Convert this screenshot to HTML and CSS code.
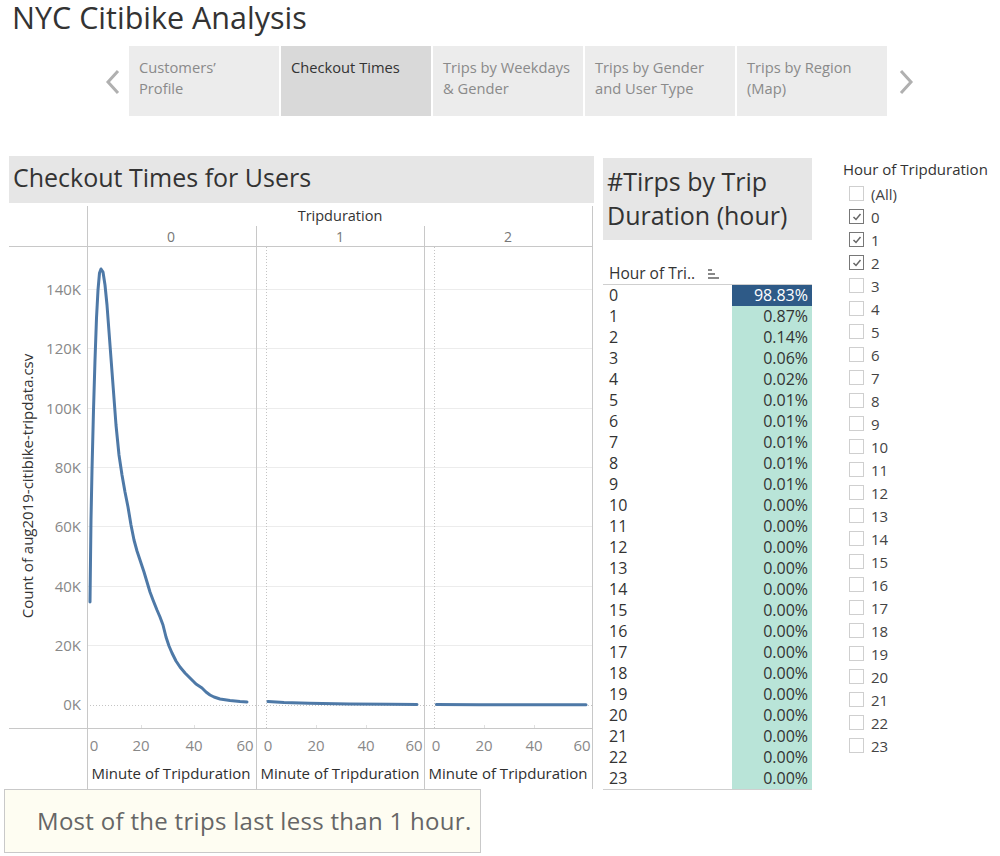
FILE: index.html
```html
<!DOCTYPE html>
<html lang="en">
<head>
<meta charset="utf-8">
<title>NYC Citibike Analysis</title>
<link rel="stylesheet" href="styles.css">
</head>
<body>
<header class="top">
  <h1 class="title">NYC Citibike Analysis</h1>
</header>
<nav class="tabs">
  <span class="arrow"><svg width="18" height="26" viewBox="0 0 18 26"><polyline points="14,2 4,13 14,24" fill="none" stroke="#b0b0b0" stroke-width="3"/></svg></span>
  <a class="tab">Customers’<br>Profile</a>
  <a class="tab active">Checkout Times</a>
  <a class="tab">Trips by Weekdays<br>&amp; Gender</a>
  <a class="tab">Trips by Gender<br>and User Type</a>
  <a class="tab">Trips by Region<br>(Map)</a>
  <span class="arrow right"><svg width="18" height="26" viewBox="0 0 18 26"><polyline points="4,2 14,13 4,24" fill="none" stroke="#b0b0b0" stroke-width="3"/></svg></span>
</nav>
<main class="dash">
  <section class="chart-col">
    <h2 class="sheet-title">Checkout Times for Users</h2>
    <svg class="chart" width="585" height="586" viewBox="0 0 585 586">
      <g class="grid" stroke="#ececec" stroke-width="1">
        <line x1="78" y1="86.5" x2="583" y2="86.5"/>
        <line x1="78" y1="145.5" x2="583" y2="145.5"/>
        <line x1="78" y1="205.5" x2="583" y2="205.5"/>
        <line x1="78" y1="264.5" x2="583" y2="264.5"/>
        <line x1="78" y1="323.5" x2="583" y2="323.5"/>
        <line x1="78" y1="383.5" x2="583" y2="383.5"/>
        <line x1="78" y1="442.5" x2="583" y2="442.5"/>
      </g>
      <g stroke="#c4c4c4" stroke-width="1" stroke-dasharray="1 2">
        <line x1="78" y1="502.5" x2="583" y2="502.5"/>
        <line x1="257.5" y1="44" x2="257.5" y2="525"/>
        <line x1="425.5" y1="44" x2="425.5" y2="525"/>
      </g>
      <g stroke="#e0e0e0" stroke-width="1">
        <line x1="132.5" y1="522" x2="132.5" y2="525"/>
        <line x1="185.5" y1="522" x2="185.5" y2="525"/>
        <line x1="307.5" y1="522" x2="307.5" y2="525"/>
        <line x1="357.5" y1="522" x2="357.5" y2="525"/>
        <line x1="475.5" y1="522" x2="475.5" y2="525"/>
        <line x1="525.5" y1="522" x2="525.5" y2="525"/>
      </g>
      <g stroke="#c8c8c8" stroke-width="1">
        <line x1="78.5" y1="3" x2="78.5" y2="586"/>
        <line x1="247.5" y1="23" x2="247.5" y2="586"/>
        <line x1="415.5" y1="23" x2="415.5" y2="586"/>
        <line x1="583.5" y1="3" x2="583.5" y2="586"/>
        <line x1="0" y1="43.5" x2="584" y2="43.5"/>
        <line x1="0" y1="525.5" x2="584" y2="525.5"/>
      </g>
      <g fill="none" stroke="#4e79a7" stroke-width="3" stroke-linecap="round" stroke-linejoin="round">
        <polyline points="81,399 81.5,357 82,317 83,267 84.5,207 86,157 87.5,115 89,87 90.5,70 92,66 94,69 96,82 98,102 101,142 104,182 107,222 110,252 113,272 116,289 119,304 122,322 125,337 128,348 131,357 135,369 138,379 141,389 144,397 148,407 151,414 154,422 157,434 160,443 163,450 167,458 171,464 176,470 181,475 187,481 193,485 197,489 201,492 205,494 211,496 221,497.5 231,498.5 238,499"/>
        <polyline points="259,498.5 275,499.6 300,500.3 340,500.9 380,501.2 408,501.4"/>
        <polyline points="427.5,501.6 470,501.7 520,501.8 577,501.8"/>
      </g>
      <g class="hdr">
        <text x="331" y="18" text-anchor="middle" class="dark">Tripduration</text>
        <text x="162" y="39" text-anchor="middle" class="light">0</text>
        <text x="331" y="39" text-anchor="middle" class="light">1</text>
        <text x="499" y="39" text-anchor="middle" class="light">2</text>
      </g>
      <g class="ylab" text-anchor="end">
        <text x="72" y="92">140K</text>
        <text x="72" y="151">120K</text>
        <text x="72" y="211">100K</text>
        <text x="72" y="270">80K</text>
        <text x="72" y="329">60K</text>
        <text x="72" y="389">40K</text>
        <text x="72" y="448">20K</text>
        <text x="72" y="507">0K</text>
      </g>
      <text class="ytitle" transform="translate(24 283) rotate(-90)" text-anchor="middle">Count of aug2019-citibike-tripdata.csv</text>
      <g class="xlab" text-anchor="middle">
        <text x="85" y="548">0</text>
        <text x="132" y="548">20</text>
        <text x="185" y="548">40</text>
        <text x="236" y="548">60</text>
        <text x="259" y="548">0</text>
        <text x="307" y="548">20</text>
        <text x="357" y="548">40</text>
        <text x="405" y="548">60</text>
        <text x="427" y="548">0</text>
        <text x="475" y="548">20</text>
        <text x="525" y="548">40</text>
        <text x="573" y="548">60</text>
      </g>
      <g class="xtitle" text-anchor="middle">
        <text x="162" y="576">Minute of Tripduration</text>
        <text x="331" y="576">Minute of Tripduration</text>
        <text x="499" y="576">Minute of Tripduration</text>
      </g>
    </svg>
    <div class="caption">Most of the trips last less than 1 hour.</div>
  </section>

  <section class="table-col">
    <h2 class="sheet-title tall">#Tirps by Trip<br>Duration (hour)</h2>
    <table class="pct">
      <thead>
        <tr><th>Hour of Tri.. <svg class="sort" width="12" height="10" viewBox="0 0 12 10"><g stroke="#555" stroke-width="1.4"><line x1="0" y1="1" x2="4" y2="1"/><line x1="0" y1="5" x2="7" y2="5"/><line x1="0" y1="9" x2="11" y2="9"/></g></svg></th><th></th></tr>
      </thead>
      <tbody>
        <tr><td>0</td><td class="v top">98.83%</td></tr>
        <tr><td>1</td><td class="v">0.87%</td></tr>
        <tr><td>2</td><td class="v">0.14%</td></tr>
        <tr><td>3</td><td class="v">0.06%</td></tr>
        <tr><td>4</td><td class="v">0.02%</td></tr>
        <tr><td>5</td><td class="v">0.01%</td></tr>
        <tr><td>6</td><td class="v">0.01%</td></tr>
        <tr><td>7</td><td class="v">0.01%</td></tr>
        <tr><td>8</td><td class="v">0.01%</td></tr>
        <tr><td>9</td><td class="v">0.01%</td></tr>
        <tr><td>10</td><td class="v">0.00%</td></tr>
        <tr><td>11</td><td class="v">0.00%</td></tr>
        <tr><td>12</td><td class="v">0.00%</td></tr>
        <tr><td>13</td><td class="v">0.00%</td></tr>
        <tr><td>14</td><td class="v">0.00%</td></tr>
        <tr><td>15</td><td class="v">0.00%</td></tr>
        <tr><td>16</td><td class="v">0.00%</td></tr>
        <tr><td>17</td><td class="v">0.00%</td></tr>
        <tr><td>18</td><td class="v">0.00%</td></tr>
        <tr><td>19</td><td class="v">0.00%</td></tr>
        <tr><td>20</td><td class="v">0.00%</td></tr>
        <tr><td>21</td><td class="v">0.00%</td></tr>
        <tr><td>22</td><td class="v">0.00%</td></tr>
        <tr><td>23</td><td class="v">0.00%</td></tr>
      </tbody>
    </table>
  </section>

  <aside class="filter">
    <div class="filter-title">Hour of Tripduration</div>
    <ul class="checks">
      <li><span class="box"></span>(All)</li>
      <li><span class="box on"><svg width="10" height="10" viewBox="0 0 10 10"><polyline points="1.5,5 4,7.5 8.5,2" fill="none" stroke="#666" stroke-width="1.5"/></svg></span>0</li>
      <li><span class="box on"><svg width="10" height="10" viewBox="0 0 10 10"><polyline points="1.5,5 4,7.5 8.5,2" fill="none" stroke="#666" stroke-width="1.5"/></svg></span>1</li>
      <li><span class="box on"><svg width="10" height="10" viewBox="0 0 10 10"><polyline points="1.5,5 4,7.5 8.5,2" fill="none" stroke="#666" stroke-width="1.5"/></svg></span>2</li>
      <li><span class="box"></span>3</li>
      <li><span class="box"></span>4</li>
      <li><span class="box"></span>5</li>
      <li><span class="box"></span>6</li>
      <li><span class="box"></span>7</li>
      <li><span class="box"></span>8</li>
      <li><span class="box"></span>9</li>
      <li><span class="box"></span>10</li>
      <li><span class="box"></span>11</li>
      <li><span class="box"></span>12</li>
      <li><span class="box"></span>13</li>
      <li><span class="box"></span>14</li>
      <li><span class="box"></span>15</li>
      <li><span class="box"></span>16</li>
      <li><span class="box"></span>17</li>
      <li><span class="box"></span>18</li>
      <li><span class="box"></span>19</li>
      <li><span class="box"></span>20</li>
      <li><span class="box"></span>21</li>
      <li><span class="box"></span>22</li>
      <li><span class="box"></span>23</li>
    </ul>
  </aside>
</main>
</body>
</html>
```

FILE: styles.css
```css
* { box-sizing: border-box; }

body {
  margin: 0;
  background: #fff;
  font-family: "Open Sans", "Liberation Sans", sans-serif;
  color: #333;
  width: 1000px;
  height: 856px;
  overflow: hidden;
}

.top { padding: 0 0 0 12px; height: 46px; }

.title {
  margin: 0;
  font-size: 30.5px;
  font-weight: 400;
  line-height: 34px;
  color: #333;
}

.tabs {
  display: flex;
  gap: 2px;
  padding-left: 104px;
  height: 70px;
}

.arrow {
  width: 23px;
  display: flex;
  align-items: center;
  justify-content: flex-start;
  padding-top: 2px;
}
.arrow.right { padding-left: 8px; width: 30px; }

.tab {
  width: 150px;
  background: #ececec;
  color: #8a8a8a;
  font-size: 14.7px;
  line-height: 21px;
  padding: 11px 10px 0;
}
.tab.active { background: #d9d9d9; color: #333; }

.dash {
  display: flex;
  align-items: flex-start;
  margin-top: 40px;
  padding-left: 9px;
}

.chart-col { width: 585px; display: flex; flex-direction: column; }

.sheet-title {
  margin: 0;
  background: #e6e6e6;
  font-weight: 400;
  color: #333;
  font-size: 25px;
  height: 47px;
  line-height: 43px;
  padding-left: 4px;
}

.chart { display: block; font-family: "Open Sans", "Liberation Sans", sans-serif; }
.chart text { font-size: 14px; }
.chart .dark { fill: #333; font-size: 14.5px; }
.chart .light { fill: #777; }
.chart .ylab text, .chart .xlab text { fill: #888; font-size: 15px; }
.chart .ytitle { fill: #333; font-size: 15px; }
.chart .xtitle text { fill: #2f2f2f; font-size: 15px; }

.caption {
  margin-left: -5px;
  width: 477px;
  height: 64px;
  border: 1px solid #c9c9c9;
  background: #fefdf2;
  color: #666;
  font-size: 24px;
  letter-spacing: 0.3px;
  line-height: 62px;
  padding-left: 32px;
}

.table-col { width: 209px; margin-left: 9px; margin-top: 2px; }

.sheet-title.tall {
  height: 82px;
  font-size: 25px;
  line-height: 34px;
  padding-top: 6px;
}

.pct {
  margin-top: 22px;
  width: 209px;
  border-collapse: collapse;
  font-size: 16px;
  color: #333;
}
.pct th {
  text-align: left;
  font-weight: 400;
  font-size: 15.5px;
  height: 21px;
  padding: 0 0 0 6px;
  border-bottom: 1px solid #cfcfcf;
  white-space: nowrap;
}
.pct th:last-child { width: 80px; }
.pct .sort { margin-left: 9px; vertical-align: 0; }
.pct td { height: 21px; padding: 0 0 0 6px; line-height: 21px; }
.pct tbody tr:last-child td { border-bottom: 1px solid #cfcfcf; }
.pct td.v { background: #b9e4d8; text-align: right; padding: 0 4px 0 0; }
.pct td.top { background: #2e5a87; color: #fff; }

.filter { margin-left: 31px; margin-top: 3px; }
.filter-title { font-size: 15px; font-weight: 500; color: #333; height: 23px; line-height: 20px; }
.checks { list-style: none; margin: 0; padding: 0 0 0 6px; }
.checks li {
  display: flex;
  align-items: center;
  gap: 7px;
  height: 23px;
  font-size: 15px;
  color: #444;
}
.box {
  width: 15px;
  height: 15px;
  border: 1px solid #cfcfcf;
  display: inline-flex;
  align-items: center;
  justify-content: center;
}
.box.on { border-color: #777; }
```
